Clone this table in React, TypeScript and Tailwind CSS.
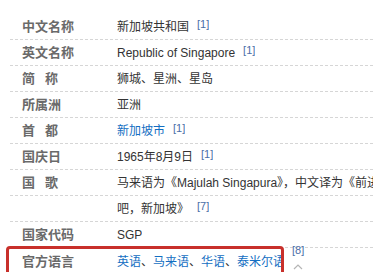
const font = "font-['Liberation_Sans','Noto_Sans_CJK_SC',sans-serif]"

function Ref({ n }: { n: number }) {
  return <sup className="ml-[8px] text-[11px] text-[#4a6ea8] relative top-[-3px]">[{n}]</sup>
}

function Row({ label, children }: { label?: React.ReactNode; children?: React.ReactNode }) {
  return (
    <div className="flex items-center h-[26px] ml-[10px] border-b border-dashed border-[#d6d6d6]">
      <div className="w-[107px] shrink-0 pl-[12px] text-[13px] font-bold text-[#6a6a6a] flex">{label}</div>
      <div className="min-w-0 overflow-hidden text-[12px] text-[#333] whitespace-nowrap flex items-center">{children}</div>
    </div>
  )
}

const Link = ({ children }: { children: React.ReactNode }) => <span className="text-[#136ec2]">{children}</span>

const Spaced = ({ a, b }: { a: string; b: string }) => (
  <>
    <span>{a}</span>
    <span className="ml-[10px]">{b}</span>
  </>
)

export default function App() {
  return (
    <div className={`${font} w-[373px] h-[272px] overflow-hidden bg-white pt-[14px]`}>
      <Row label="中文名称">
        新加坡共和国 <Ref n={1} />
      </Row>
      <Row label="英文名称">
        Republic of Singapore <Ref n={1} />
      </Row>
      <Row label={<Spaced a="简" b="称" />}>狮城、星洲、星岛</Row>
      <Row label="所属洲">亚洲</Row>
      <Row label={<Spaced a="首" b="都" />}>
        <Link>新加坡市</Link> <Ref n={1} />
      </Row>
      <Row label="国庆日">
        1965年8月9日 <Ref n={1} />
      </Row>
      <Row label={<Spaced a="国" b="歌" />}>马来语为《Majulah Singapura》，中文译为《前进吧，新加坡》</Row>
      <Row>
        吧，新加坡》 <Ref n={7} />
      </Row>
      <Row label="国家代码">SGP</Row>
      <div className="flex items-start">
        <div className="ml-[6px] mt-[-2px] w-[278px] h-[40px] shrink-0 rounded-[4px] border-[3px] border-[#c8302b] overflow-hidden">
          <div className="flex items-center h-[26px] whitespace-nowrap">
            <div className="w-[108px] shrink-0 pl-[13px] text-[13px] font-bold text-[#6a6a6a]">官方语言</div>
            <div className="text-[12px] text-[#333]">
              <Link>英语</Link>、<Link>马来语</Link>、<Link>华语</Link>、<Link>泰米尔语</Link>
            </div>
          </div>
        </div>
        <div className="ml-[8px] mt-[-6px] flex flex-col items-center">
          <span className="text-[11px] text-[#4a6ea8]">[8]</span>
          <svg className="mt-[4px]" width="10" height="8" viewBox="0 0 10 8">
            <path d="M1 6 L5 2 L9 6" fill="none" stroke="#b5b5b5" strokeWidth="1.2" />
          </svg>
        </div>
      </div>
    </div>
  )
}
